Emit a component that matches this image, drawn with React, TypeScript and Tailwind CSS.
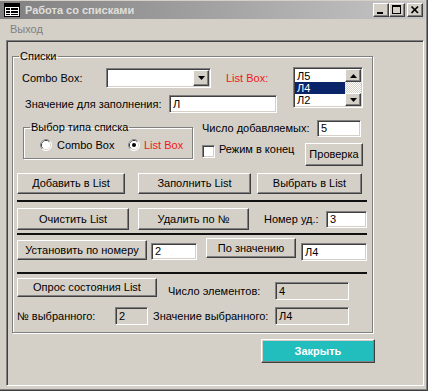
import React from "react";

const raised =
  "border border-t-white border-l-white border-r-[#404040] border-b-[#404040] shadow-[inset_-1px_-1px_#808080,inset_1px_1px_#d4d0c8]";
const sunken =
  "border border-t-[#808080] border-l-[#808080] border-r-white border-b-white shadow-[inset_1px_1px_#404040,inset_-1px_-1px_#d4d0c8]";

function Btn({ className = "", children }: { className?: string; children: React.ReactNode }) {
  return (
    <div className={`${raised} bg-[#d4d0c8] shrink-0 flex items-center justify-center whitespace-nowrap ${className}`}>
      {children}
    </div>
  );
}

function Field({
  className = "",
  children,
  disabled = false,
}: {
  className?: string;
  children?: React.ReactNode;
  disabled?: boolean;
}) {
  return (
    <div
      className={`${sunken} ${disabled ? "bg-[#d4d0c8]" : "bg-white"} shrink-0 flex items-center pl-[3px] whitespace-nowrap ${className}`}
    >
      {children}
    </div>
  );
}

function Radio({ checked }: { checked?: boolean }) {
  return (
    <svg width="12" height="12" viewBox="0 0 12 12" className="shrink-0">
      <circle cx="6" cy="6" r="5.5" fill="#fff" stroke="#ffffff" />
      <path d="M2.11 9.89 A5.5 5.5 0 0 1 9.89 2.11" fill="none" stroke="#808080" />
      <circle cx="6" cy="6" r="4.5" fill="none" stroke="#d4d0c8" />
      <path d="M2.82 9.18 A4.5 4.5 0 0 1 9.18 2.82" fill="none" stroke="#404040" />
      <circle cx="6" cy="6" r="4" fill="#fff" />
      {checked && <circle cx="6" cy="6" r="2" fill="#000" />}
    </svg>
  );
}

function TriDown() {
  return (
    <svg width="7" height="4" viewBox="0 0 7 4">
      <path d="M0 0 H7 L3.5 4 Z" fill="#000" />
    </svg>
  );
}
function TriUp() {
  return (
    <svg width="7" height="4" viewBox="0 0 7 4">
      <path d="M0 4 H7 L3.5 0 Z" fill="#000" />
    </svg>
  );
}

function CapBtn({ kind, className = "" }: { kind: "min" | "max" | "close"; className?: string }) {
  return (
    <div className={`${raised} bg-[#d4d0c8] w-[16px] h-[14px] shrink-0 ${className}`}>
      <svg width="14" height="12" viewBox="0 0 14 12">
        {kind === "min" && <rect x="3" y="8" width="6" height="2" fill="#000" />}
        {kind === "max" && (
          <g>
            <rect x="2.5" y="1.5" width="8" height="8" fill="none" stroke="#000" />
            <rect x="2" y="1" width="9" height="2" fill="#000" />
          </g>
        )}
        {kind === "close" && (
          <g stroke="#000" strokeWidth="1.7">
            <line x1="3.5" y1="2.5" x2="10" y2="9" />
            <line x1="10" y1="2.5" x2="3.5" y2="9" />
          </g>
        )}
      </svg>
    </div>
  );
}

function Sep({ className = "" }: { className?: string }) {
  return <div className={`ml-[4px] w-[350px] h-[2px] bg-[#111] ${className}`} />;
}

export default function App() {
  return (
    <div className="w-[428px] h-[391px] bg-[#d4d0c8] font-['Liberation_Sans',Arial,sans-serif] text-[11px] leading-[13px] text-black flex flex-col overflow-hidden select-none shadow-[inset_-1px_-1px_#404040,inset_-2px_-2px_#808080]">
      {/* Title bar */}
      <div className="h-[18px] mt-[1px] mr-[3px] flex items-center bg-linear-to-r from-[#808080] to-[#c6c6c6]">
        <svg width="16" height="14" viewBox="0 0 16 14" className="ml-[4px] shrink-0">
          <rect x="0.5" y="0.5" width="15" height="13" fill="#fff" stroke="#000" />
          <rect x="1" y="1" width="14" height="3" fill="#000" />
          <rect x="2" y="5" width="4" height="2" fill="#000" />
          <rect x="7" y="5" width="7" height="2" fill="#000" />
          <rect x="2" y="8" width="4" height="2" fill="#000" />
          <rect x="7" y="8" width="7" height="2" fill="#000" />
          <rect x="2" y="11" width="4" height="1" fill="#000" />
          <rect x="7" y="11" width="7" height="1" fill="#000" />
        </svg>
        <span className="ml-[5px] font-bold text-[#e0dfdc] whitespace-nowrap">Работа со списками</span>
        <div className="ml-auto flex items-center mr-[2px]">
          <CapBtn kind="min" />
          <CapBtn kind="max" />
          <CapBtn kind="close" className="ml-[2px]" />
        </div>
      </div>

      {/* Menu bar */}
      <div className="h-[19px] flex items-center pl-[10px] pt-[2px] text-[#808080]">Выход</div>

      {/* Form */}
      <div className={`${sunken} ml-[6px] mt-[2px] w-[418px] h-[346px] p-[1px] flex flex-col`}>
        <fieldset className="ml-[4px] mt-[8px] w-[361px] h-[283px] border border-[#808080] shadow-[inset_1px_1px_#ffffff,1px_1px_#ffffff]">
          <legend className="ml-[6px] px-[1px] leading-[13px]">Списки</legend>
          <div className="flex flex-col">
            {/* top section */}
            <div className="flex mt-[4px]">
              <div className="w-[280px] flex flex-col">
                <div className="flex items-center h-[20px] mt-[1px]">
                  <span className="ml-[9px] w-[84px]">Combo Box:</span>
                  <div className={`${sunken} bg-white w-[105px] h-[20px] p-[1px] flex justify-end`}>
                    <div className={`${raised} bg-[#d4d0c8] w-[16px] h-full flex items-center justify-center`}>
                      <TriDown />
                    </div>
                  </div>
                  <span className="ml-[15px] text-[#f01818]">List Box:</span>
                </div>
                <div className="flex items-center mt-[7px] h-[18px]">
                  <span className="ml-[12px] w-[144px] whitespace-nowrap">Значение для заполнения:</span>
                  <Field className="w-[108px] h-[18px]">Л</Field>
                </div>
              </div>
              <div className={`${sunken} bg-white w-[70px] h-[41px] p-[1px] flex`}>
                <div className="flex-1 flex flex-col pt-[1px]">
                  <div className="h-[12px] leading-[12px] pl-[2px]">Л5</div>
                  <div className="h-[12px] leading-[12px] pl-[2px] bg-[#0a246a] text-white">Л4</div>
                  <div className="h-[12px] leading-[12px] pl-[2px]">Л2</div>
                </div>
                <div className="w-[16px] flex flex-col">
                  <div className={`${raised} bg-[#d4d0c8] h-[13px] flex items-center justify-center`}>
                    <TriUp />
                  </div>
                  <div className="flex-1 bg-[repeating-conic-gradient(#ffffff_0%_25%,#d4d0c8_0%_50%)] bg-[length:2px_2px]" />
                  <div className={`${raised} bg-[#d4d0c8] h-[13px] flex items-center justify-center`}>
                    <TriDown />
                  </div>
                </div>
              </div>
            </div>

            {/* middle section */}
            <div className="flex mt-[7px]">
              <fieldset className="ml-[10px] mt-[1px] w-[170px] h-[38px] border border-[#808080] shadow-[inset_1px_1px_#ffffff,1px_1px_#ffffff]">
                <legend className="ml-[6px] px-[1px] leading-[13px] whitespace-nowrap">Выбор типа списка</legend>
                <div className="flex items-center mt-[5px] h-[12px]">
                  <span className="ml-[16px] flex">
                    <Radio />
                  </span>
                  <span className="ml-[5px] w-[71px]">Combo Box</span>
                  <Radio checked />
                  <span className="ml-[4px] text-[#f01818]">List Box</span>
                </div>
              </fieldset>
              <div className="ml-[9px] w-[159px] flex flex-col">
                <div className="flex items-center h-[17px]">
                  <span className="whitespace-nowrap">Число добавляемых:</span>
                  <Field className="ml-auto w-[44px] h-[17px]">5</Field>
                </div>
                <div className="flex items-start mt-[6px]">
                  <div className={`${sunken} bg-white w-[13px] h-[13px] mt-[2px] shrink-0`} />
                  <span className="ml-[4px] mt-[0px] whitespace-nowrap">Режим в конец</span>
                  <Btn className="ml-auto w-[58px] h-[23px] mr-[-2px]">Проверка</Btn>
                </div>
              </div>
            </div>

            {/* button row */}
            <div className="flex mt-[7px] h-[21px]">
              <Btn className="ml-[4px] w-[108px] h-[21px]">Добавить в List</Btn>
              <Btn className="ml-[13px] w-[113px] h-[21px]">Заполнить List</Btn>
              <Btn className="ml-[6px] w-[105px] h-[21px]">Выбрать в List</Btn>
            </div>

            <Sep className="mt-[6px]" />

            <div className="flex items-start mt-[6px] w-[354px]">
              <Btn className="ml-[4px] w-[112px] h-[22px]">Очистить List</Btn>
              <Btn className="ml-[9px] w-[111px] h-[22px]">Удалить по №</Btn>
              <span className="ml-[15px] mt-[5px] whitespace-nowrap">Номер уд.:</span>
              <Field className="ml-auto mt-[3px] w-[41px] h-[17px]">3</Field>
            </div>

            <Sep className="mt-[3px]" />

            <div className="flex items-start mt-[3px] w-[354px]">
              <Btn className="ml-[4px] mt-[2px] w-[130px] h-[20px]">Установить по номеру</Btn>
              <Field className="ml-[4px] mt-[5px] w-[46px] h-[17px]">2</Field>
              <Btn className="ml-[9px] w-[90px] h-[20px]">По значению</Btn>
              <Field className="ml-[5px] mt-[5px] w-[66px] h-[18px]">Л4</Field>
            </div>

            <Sep className="mt-[11px]" />

            <div className="flex items-start mt-[4px]">
              <Btn className="ml-[4px] w-[140px] h-[19px]">Опрос состояния List</Btn>
              <span className="ml-[11px] mt-[7px] w-[107px] whitespace-nowrap">Число элементов:</span>
              <Field disabled className="mt-[4px] w-[74px] h-[18px]">4</Field>
            </div>

            <div className="flex items-center mt-[7px] h-[18px]">
              <span className="ml-[4px] w-[98px] whitespace-nowrap">№ выбранного:</span>
              <Field disabled className="w-[33px] h-[18px]">2</Field>
              <span className="ml-[5px] w-[122px] whitespace-nowrap">Значение выбранного:</span>
              <Field disabled className="w-[74px] h-[18px]">Л4</Field>
            </div>
          </div>
        </fieldset>

        <div
          className={`${raised} ml-[253px] mt-[6px] w-[114px] h-[24px] bg-[#22bdbd] shadow-[inset_-1px_-1px_#1a8080] flex items-center justify-center text-white font-bold`}
        >
          Закрыть
        </div>
      </div>
    </div>
  );
}
